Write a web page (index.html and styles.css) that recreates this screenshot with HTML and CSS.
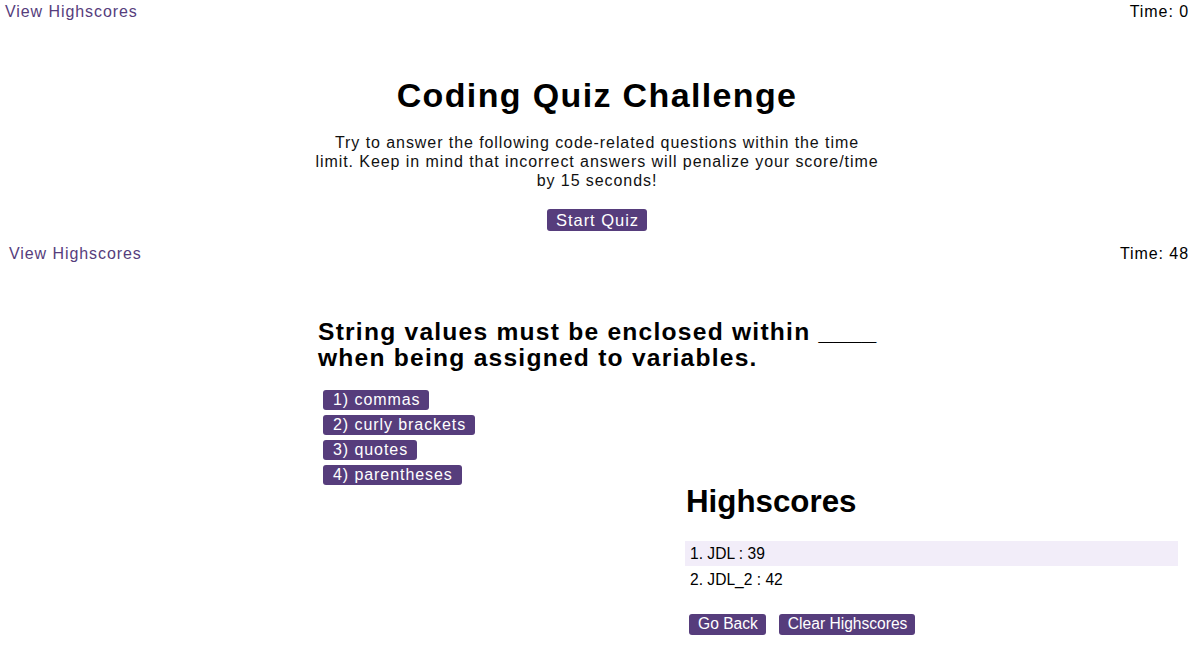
FILE: index.html
```html
<!DOCTYPE html>
<html lang="en">
<head>
<meta charset="utf-8">
<title>Coding Quiz Challenge</title>
<link rel="stylesheet" href="styles.css">
</head>
<body>
<section class="screen start">
  <header class="topbar">
    <a class="hs-link" href="#">View Highscores</a>
    <span class="timer">Time: 0</span>
  </header>
  <div class="panel centered">
    <h1 class="title">Coding Quiz Challenge</h1>
    <p class="intro">Try to answer the following code-related questions within the time limit. Keep in mind that incorrect answers will penalize your score/time by 15 seconds!</p>
    <button class="btn btn-start">Start Quiz</button>
  </div>
</section>

<section class="screen quiz">
  <header class="topbar topbar-2">
    <a class="hs-link" href="#">View Highscores</a>
    <span class="timer">Time: 48</span>
  </header>
  <div class="panel">
    <h2 class="question">String values must be enclosed within <span class="blank">____</span> when being assigned to variables.</h2>
    <div class="choices">
      <button class="btn btn-choice">1) commas</button>
      <button class="btn btn-choice">2) curly brackets</button>
      <button class="btn btn-choice">3) quotes</button>
      <button class="btn btn-choice">4) parentheses</button>
    </div>
  </div>
</section>

<section class="screen scores">
  <h2 class="scores-title">Highscores</h2>
  <ol class="score-list">
    <li class="score-row odd">1. JDL : 39</li>
    <li class="score-row">2. JDL_2 : 42</li>
  </ol>
  <div class="score-actions">
    <button class="btn btn-small">Go Back</button>
    <button class="btn btn-small">Clear Highscores</button>
  </div>
</section>
</body>
</html>
```

FILE: styles.css
```css
html, body {
  margin: 0;
  padding: 0;
  background: #ffffff;
}

body {
  font-family: "Liberation Sans", Arial, sans-serif;
  font-size: 16px;
  color: #000;
  letter-spacing: 0.058em;
  width: 1194px;
  height: 645px;
  overflow: hidden;
}

.topbar {
  display: flex;
  justify-content: space-between;
  align-items: center;
  padding: 2px 5px 0 5px;
  height: 20px;
}

.topbar-2 {
  padding: 0 5px 0 9px;
  height: 18px;
  margin-top: 14px;
}

.hs-link {
  color: #563d7c;
  text-decoration: none;
  line-height: 18px;
}

.timer {
  color: #000;
  line-height: 18px;
}

.panel {
  width: 562px;
  margin: 0 auto;
}

.centered {
  width: 567px;
  text-align: center;
}

.title {
  font-size: 34px;
  font-weight: bold;
  line-height: 39px;
  letter-spacing: 0.04em;
  margin: 54px 0 0 0;
}

.intro {
  font-size: 16px;
  line-height: 19px;
  margin: 18px 0 0 0;
  color: #111;
}

.btn {
  font-family: "Liberation Sans", Arial, sans-serif;
  letter-spacing: 0.058em;
  background: #563d7c;
  color: #fff;
  border: none;
  border-radius: 3px;
  font-size: 16px;
  line-height: 18px;
  cursor: pointer;
}

.btn-start {
  margin-top: 19px;
  padding: 2px 8px 2px 9px;
  font-size: 16.5px;
}

.question {
  width: 590px;
  font-size: 24.6px;
  font-weight: bold;
  line-height: 26px;
  letter-spacing: 0.05em;
  margin: 55px 0 0 2px;
}

.blank {
  letter-spacing: 0;
  font-size: 26px;
}

.choices {
  display: flex;
  flex-direction: column;
  align-items: flex-start;
  gap: 5px;
  margin: 19px 0 0 7px;
}

.btn-choice {
  padding: 1px 9px 1px 10px;
}

.scores {
  margin-left: 685px;
  width: 493px;
  letter-spacing: 0;
}

.scores-title {
  font-size: 31.3px;
  font-weight: bold;
  line-height: 34px;
  margin: 0 0 0 1px;
}

.score-list {
  list-style: none;
  margin: 22px 0 0 0;
  padding: 0;
  font-size: 15.6px;
}

.score-row {
  height: 25px;
  line-height: 25px;
  padding-left: 5px;
  margin-bottom: 1px;
}

.score-row.odd {
  background: #f2edf9;
}

.score-actions {
  display: flex;
  gap: 13px;
  margin: 22px 0 0 4px;
}

.btn-small {
  letter-spacing: 0;
  font-size: 15.6px;
  padding: 1px 8px 2px 9px;
}
```
